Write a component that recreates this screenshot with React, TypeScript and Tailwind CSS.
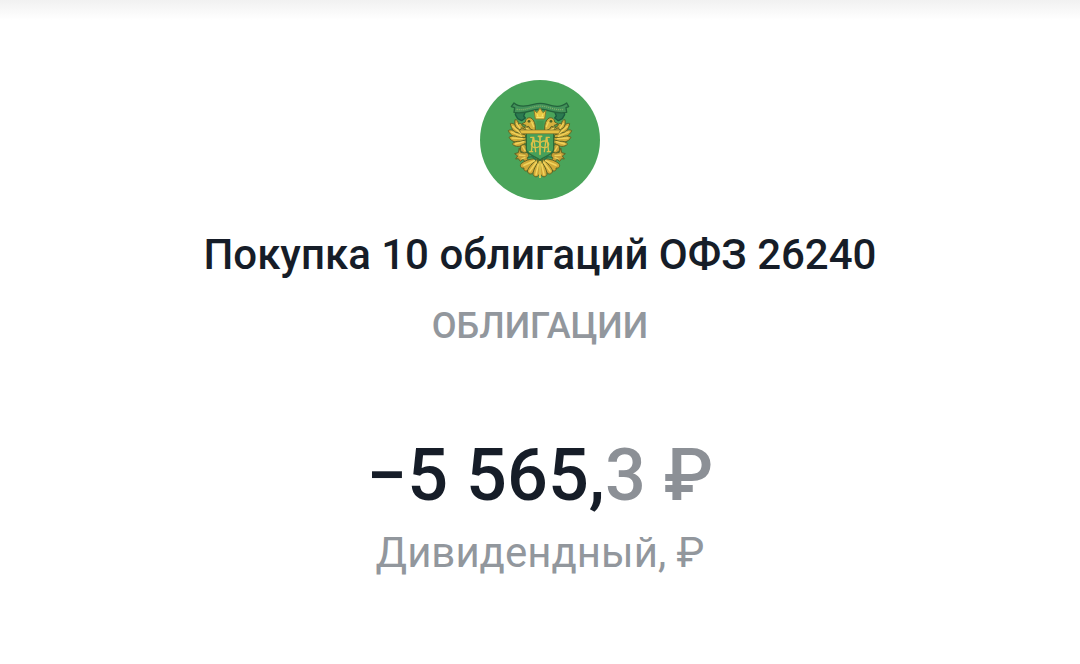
import React from 'react';

const operation = {
  title: 'Покупка 10 облигаций ОФЗ 26240',
  category: 'ОБЛИГАЦИИ',
  whole: '−5 565,',
  fraction: '3 ₽',
  account: 'Дивидендный, ₽',
};

// Left half of the eagle, the right half is the same group mirrored
const EagleHalf: React.FC = () => (
  <g strokeLinejoin="round" strokeLinecap="round">
    {/* Wing feathers */}
    <g fill="#d2ac38" stroke="#5d6526" strokeWidth="3">
      <path d="M136 178C124 168 117 152 120 134C127 134 131 140 130 148C134 143 140 145 141 152L156 163L160 172L152 194Z" />
      <path d="M138 180C120 176 108 162 106 146C114 143 120 148 123 157L148 174L146 194Z" />
      <path d="M140 190C122 190 106 182 100 167C107 162 115 165 121 171L152 180L150 198Z" />
      <path d="M144 200C128 206 108 200 102 187C109 181 120 182 128 186L154 188L154 204Z" />
      <path d="M148 206C138 217 120 217 112 207C117 200 126 198 136 199L156 194L158 208Z" />
    </g>
    <path d="M125 145L141 169M113 154L138 176M109 171L140 184M111 189L142 191M121 207L146 200" fill="none" stroke="#f0d35c" strokeWidth="4" />
    {/* Leg and claw */}
    <g fill="#c8a037" stroke="#5d6526" strokeWidth="3">
      <path d="M138 212C144 206 152 208 155 214L159 230L149 236L137 227Z" />
      <path d="M133 220L137 232L147 234L158 232L162 244L156 249L162 259L150 260L144 253L136 259L130 251L122 252L128 243L119 236L129 233Z" />
    </g>
    <path d="M143 215L150 227M133 240L150 242M141 251L150 248" fill="none" stroke="#ecd05a" strokeWidth="4" />
    {/* Tail */}
    <g fill="#d2aa38" stroke="#5d6526" strokeWidth="3">
      <path d="M180 251C163 252 149 257 138 266C133 274 139 281 147 279C145 287 152 291 160 285L185 264Z" />
      <path d="M186 253C172 265 160 277 157 288C159 298 169 300 175 292L190 269Z" />
      <path d="M192 255C184 269 174 285 174 298C178 308 188 308 193 298Z" />
    </g>
    <path d="M147 271L178 257M165 288L184 262M183 299L190 268" fill="none" stroke="#f0d35c" strokeWidth="5" />
    {/* Neck and head */}
    <path d="M184 168L177 154L168 158L158 154L151 164L140 158L134 168L148 176L184 174Z" fill="#c9a036" stroke="#5d6526" strokeWidth="3" />
    <path d="M181 162C182 148 178 135 168 129C158 126 151 133 151 141L140 147L153 151L147 158L161 154L166 162L177 167Z" fill="#d6b23e" stroke="#5d6526" strokeWidth="3" />
    <circle cx="162" cy="139" r="4" fill="#4b5f22" />
    <path d="M170 141L176 155M153 159L164 166" stroke="#f0d65e" strokeWidth="4" />
  </g>
);

const Emblem: React.FC = () => (
  <svg viewBox="15 15 360 360" className="size-30" role="img" aria-label="ОФЗ">
    <circle cx="195" cy="195" r="180" fill="#4aa45a" />

    {/* Ribbon tails */}
    <g fill="#2b7a50" stroke="#1c5c40" strokeWidth="4" strokeLinejoin="round">
      <path d="M123 110L150 113L146 123L151 129L140 137L128 131L121 119Z" />
      <path d="M267 110L240 113L244 123L239 129L250 137L262 131L269 119Z" />
    </g>

    <EagleHalf />
    <g transform="translate(390 0) scale(-1 1)">
      <EagleHalf />
    </g>

    {/* Ribbon */}
    <path
      d="M117 84C133 99 156 94 176 88C190 84 202 84 216 88C236 94 257 99 275 84L281 95L273 98L275 112C249 117 231 110 213 105C201 102 190 102 178 105C160 110 140 117 117 112L119 98L109 95Z"
      fill="#43935a"
      stroke="#24633c"
      strokeWidth="4"
      strokeLinejoin="round"
    />
    <path d="M125 103C147 107 162 99 180 95C192 93 201 93 212 95C230 99 246 107 267 103" fill="none" stroke="#86b068" strokeWidth="4" strokeDasharray="3 3" />

    {/* Crown */}
    <path d="M177 106L186 113L195 99L204 113L213 106L209 132H181Z" fill="#e8c742" stroke="#8a7b2d" strokeWidth="3" strokeLinejoin="round" />
    <path d="M184 128H206M187 118L189 125M203 118L201 125" stroke="#f7e875" strokeWidth="3" />
    <path d="M184 137H206L205 164H185Z" fill="#43994f" />

    {/* Shield */}
    <path d="M154 172H236V222C236 239 211 242 195 255C179 242 154 239 154 222Z" fill="#46a05a" stroke="#2f6b39" strokeWidth="4" />
    <path d="M133 165H257L251 176H139Z" fill="#e5bf43" stroke="#7d7029" strokeWidth="2" />
    <g fill="none" stroke="#dcc048" strokeWidth="4" strokeLinecap="round">
      <path d="M167 187H176L182 230M174 190L169 230M164 230H173" />
      <path d="M223 187H214L208 230M216 190L221 230M226 230H217" />
      <ellipse cx="182" cy="208" rx="13" ry="10" />
      <ellipse cx="208" cy="208" rx="13" ry="10" />
      <path d="M195 184V238M190 184H200" strokeWidth="5" />
    </g>
    <path d="M195 258V309" stroke="#eed050" strokeWidth="5" />
    <path d="M158 247L172 245L182 254M232 247L218 245L208 254" fill="none" stroke="#247451" strokeWidth="4" />
  </svg>
);

const App: React.FC = () => {
  return (
    <main className="min-h-screen bg-white font-['Roboto',sans-serif] text-[#161d28]">
      <div className="h-5 bg-linear-to-b from-[#f1f1f1] to-white" />

      <section className="flex flex-col items-center px-4 pt-15 pb-20 text-center">
        <Emblem />
        <h1 className="mt-7 text-[42px] leading-[54px] font-medium">{operation.title}</h1>
        <p className="mt-[22px] text-4xl leading-[44px] font-medium text-[#92979d]">{operation.category}</p>
        <p className="mt-21 text-7xl leading-[88px] font-medium">
          {operation.whole}
          <span className="text-[#8c9096]">{operation.fraction}</span>
        </p>
        <p className="mt-[6px] text-[42px] leading-[54px] text-[#92979d]">{operation.account}</p>
      </section>
    </main>
  );
};

export default App;
